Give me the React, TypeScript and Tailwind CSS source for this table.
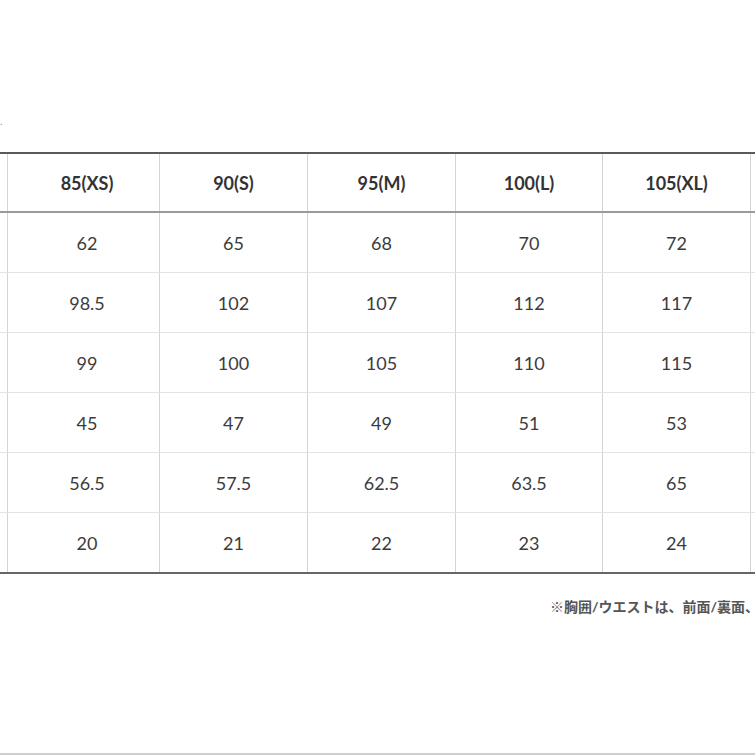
import React from "react";

const headers = ["85(XS)", "90(S)", "95(M)", "100(L)", "105(XL)"];
const rows = [
  ["62", "65", "68", "70", "72"],
  ["98.5", "102", "107", "112", "117"],
  ["99", "100", "105", "110", "115"],
  ["45", "47", "49", "51", "53"],
  ["56.5", "57.5", "62.5", "63.5", "65"],
  ["20", "21", "22", "23", "24"],
];

const widths = ["w-[152px] pl-[7px]", "w-[148px]", "w-[148px]", "w-[147px]", "w-[148px]"];

export default function App() {
  return (
    <div
      className="relative h-[755px] w-[755px] overflow-hidden bg-white"
      style={{ fontFamily: "Lato, 'Noto Sans CJK JP', sans-serif" }}
    >
      <div className="h-[120px] pt-[116px] text-[10px] leading-none text-[#888]">
        <span>.</span>
      </div>
      <div className="h-[32px]" />
      {/* table */}
      <div className="w-[800px] border-t-2 border-[#5a5a5a]">
        <div className="flex h-[59px] border-b-2 border-[#9a9a9a]">
          <div className="w-[8px] shrink-0 border-r border-[#d4d4d4]" />
          {headers.map((h, i) => (
            <div
              key={h}
              className={`${widths[i]} flex shrink-0 items-center justify-center border-r border-[#d4d4d4] pt-[1px] text-[18px] font-bold text-[#333]`}
            >
              {h}
            </div>
          ))}
          <div className="flex-1" />
        </div>
        {rows.map((r, ri) => (
          <div
            key={ri}
            className={
              ri === rows.length - 1
                ? "flex h-[61px] border-b-2 border-[#666]"
                : "flex h-[60px] border-b border-[#e3e3e3]"
            }
          >
            <div className="w-[8px] shrink-0 border-r border-[#d4d4d4]" />
            {r.map((v, i) => (
              <div
                key={i}
                className={`${widths[i]} flex shrink-0 items-center justify-center border-r border-[#d4d4d4] pt-[1px] text-[18px] text-[#3c3c3c]`}
              >
                {v}
              </div>
            ))}
            <div className="flex-1" />
          </div>
        ))}
      </div>
      <div className="mt-[26px] whitespace-nowrap pl-[550px] text-[14px] font-bold leading-none text-[#555]">
        ※胸囲/ウエストは、前面/裏面、
      </div>
      <div className="absolute bottom-0 left-0 h-[2px] w-full bg-[#cfcfcf]" />
    </div>
  );
}
